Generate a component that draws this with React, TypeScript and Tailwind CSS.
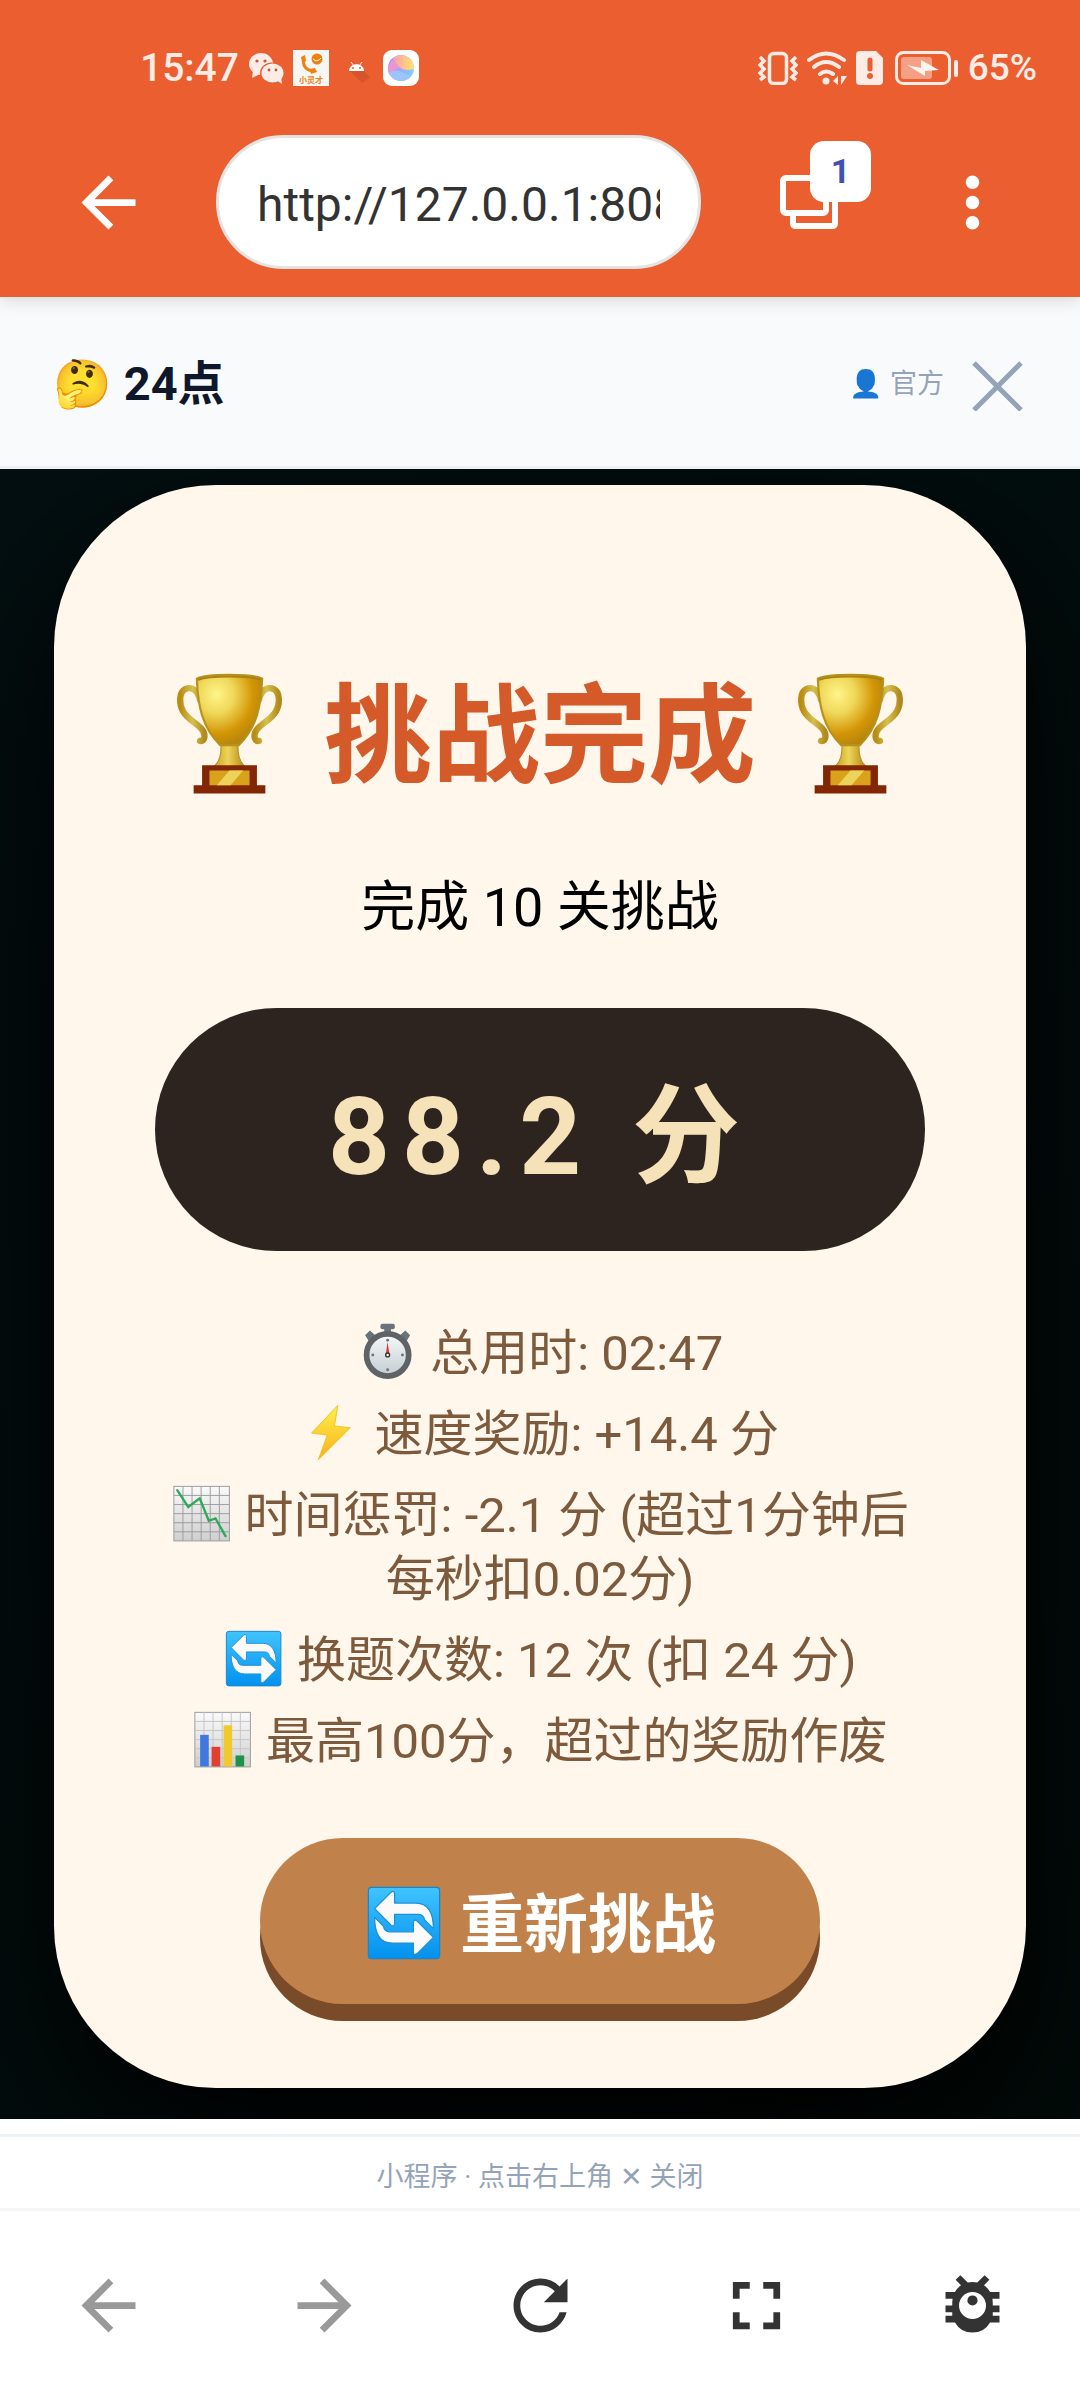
import { ReactNode } from 'react';
import { MdArrowBack, MdArrowForward, MdFullscreen, MdMoreVert, MdRefresh } from 'react-icons/md';

const STATS = [
  { icon: <Stopwatch />, text: '总用时: 02:47' },
  { icon: <Bolt />, text: '速度奖励: +14.4 分' },
  { icon: <ChartDown />, text: '时间惩罚: -2.1 分 (超过1分钟后每秒扣0.02分)' },
  { icon: <Swap />, text: '换题次数: 12 次 (扣 24 分)' },
  { icon: <BarChart />, text: '最高100分，超过的奖励作废' },
];

// Emoji sized icon that sits in a line of text
function Emoji({ children }: { children: ReactNode }) {
  return (
    <svg viewBox="0 0 128 128" aria-hidden="true" className="inline-block w-[1.25em] h-[1.25em] align-[-0.25em]">
      {children}
    </svg>
  );
}

function Trophy() {
  return (
    <Emoji>
      <defs>
        <radialGradient id="cup" cx="0.3" cy="0.28" r="0.75">
          <stop offset="0" stopColor="#fff48a" />
          <stop offset="0.35" stopColor="#f0d95c" />
          <stop offset="0.75" stopColor="#d39505" />
          <stop offset="1" stopColor="#b5850f" />
        </radialGradient>
        <linearGradient id="handle" x1="0" y1="0" x2="1" y2="0">
          <stop offset="0" stopColor="#b98c14" />
          <stop offset="0.5" stopColor="#d6c04e" />
          <stop offset="1" stopColor="#b08a1c" />
        </linearGradient>
        <linearGradient id="stem" x1="0" y1="0" x2="1" y2="0">
          <stop offset="0" stopColor="#c99a16" />
          <stop offset="0.45" stopColor="#ecd55a" />
          <stop offset="1" stopColor="#b57d08" />
        </linearGradient>
      </defs>
      <g fill="none" stroke="url(#handle)" strokeWidth="6" strokeLinecap="round">
        <path d="M36 32c-2-9-8-13-14-10s-6 14-2 21 12 11 17 16 4 13-1 12" />
        <path d="M92 32c2-9 8-13 14-10s6 14 2 21-12 11-17 16-4 13 1 12" />
      </g>
      <path d="M56 70h16v6c0 12 3 17 8 20v4H48v-4c5-3 8-8 8-20z" fill="url(#stem)" stroke="#b48c1c" strokeWidth="1" />
      <path d="M33 12c10-5 52-5 62 0-1 26-5 46-22 63H55C38 58 34 38 33 12z" fill="url(#cup)" stroke="#b8911c" strokeWidth="2" />
      <path d="M34 13c12-4 48-4 60 0" fill="none" stroke="#a98412" strokeWidth="2" />
      <path d="M38 94h52v19h8v8H30v-8h8z" fill="#822603" />
      <path d="M45 99h38v14H45z" fill="#d9a21a" />
      <path d="M52 113l12-14h13l-12 14z" fill="#ecd35c" />
    </Emoji>
  );
}

function Swap() {
  return (
    <Emoji>
      <defs>
        <linearGradient id="swap" x1="0" y1="0" x2="0" y2="1">
          <stop offset="0" stopColor="#40c4ff" />
          <stop offset="1" stopColor="#0291ee" />
        </linearGradient>
      </defs>
      <rect x="7" y="7" width="114" height="114" rx="5" fill="url(#swap)" stroke="#1a86c9" strokeWidth="2" />
      <g fill="#fafafa" stroke="#1f8fd6" strokeWidth="2" strokeLinejoin="round">
        <path d="M17 41L43 15q6-4 6 3v14h34c18 0 28 14 28 41L97 59c-1-6-4-9-10-9H49v15q-1 6-6 2z" />
        <path d="M17 41L43 15q6-4 6 3v14h34c18 0 28 14 28 41L97 59c-1-6-4-9-10-9H49v15q-1 6-6 2z" transform="rotate(180 64 64)" />
      </g>
    </Emoji>
  );
}

function Stopwatch() {
  return (
    <Emoji>
      <defs>
        <linearGradient id="dial" x1="0" y1="0" x2="0" y2="1">
          <stop offset="0" stopColor="#f7f9fa" />
          <stop offset="1" stopColor="#c2ccd2" />
        </linearGradient>
      </defs>
      <g fill="#68737a">
        <rect x="49" y="6" width="30" height="11" rx="4" />
        <rect x="57" y="14" width="14" height="14" />
        <path d="M17 30l10-10 11 10-13 13zM111 30l-10-10-11 10 13 13z" />
      </g>
      <circle cx="64" cy="71" r="44" fill="url(#dial)" stroke="#5f6366" strokeWidth="12" />
      <g fill="#6b7378">
        <circle cx="64" cy="40" r="3" />
        <circle cx="64" cy="102" r="3" />
        <circle cx="33" cy="71" r="3" />
        <circle cx="95" cy="71" r="3" />
      </g>
      <path d="M64 44l4 27h-8z" fill="#e8302a" />
      <circle cx="64" cy="71" r="4" fill="#fff" stroke="#333" strokeWidth="3" />
    </Emoji>
  );
}

function Bolt() {
  return (
    <Emoji>
      <defs>
        <linearGradient id="bolt" x1="0" y1="0" x2="0" y2="1">
          <stop offset="0" stopColor="#fdf04a" />
          <stop offset="1" stopColor="#f7b11c" />
        </linearGradient>
      </defs>
      <path d="M77 7L22 65l33 4-19 52 67-67-33-4z" fill="url(#bolt)" stroke="#f0c02c" strokeWidth="2" />
    </Emoji>
  );
}

function Sheet({ children }: { children: ReactNode }) {
  return (
    <Emoji>
      <defs>
        <linearGradient id="sheet" x1="0" y1="0" x2="0" y2="1">
          <stop offset="0" stopColor="#fafafa" />
          <stop offset="1" stopColor="#cfcfcf" />
        </linearGradient>
      </defs>
      <rect x="6" y="7" width="116" height="114" fill="url(#sheet)" stroke="#9a9a9a" strokeWidth="2" />
      {children}
    </Emoji>
  );
}

function ChartDown() {
  return (
    <Sheet>
      <path
        d="M25 7v114M44 7v114M63 7v114M82 7v114M101 7v114M6 26h116M6 45h116M6 64h116M6 83h116M6 102h116"
        stroke="#9c9c9c"
        strokeWidth="2"
      />
      <path d="M13 15l23 35 24-18 19 47 14-5 21 37" fill="none" stroke="#34a85a" strokeWidth="5" strokeLinecap="round" />
    </Sheet>
  );
}

function BarChart() {
  return (
    <Sheet>
      <path
        d="M25 7v114M44 7v114M63 7v114M82 7v114M101 7v114M6 26h116M6 45h116M6 64h116M6 83h116M6 102h116"
        stroke="#c4c4c4"
        strokeWidth="2"
      />
      <rect x="17" y="54" width="18" height="66" fill="#3f78e0" />
      <rect x="41" y="79" width="18" height="41" fill="#e0402f" />
      <rect x="66" y="34" width="18" height="86" fill="#f0c92e" />
      <rect x="91" y="97" width="18" height="23" fill="#1f9248" />
    </Sheet>
  );
}

function StatusBar() {
  return (
    <div className="h-[135px] pl-[140px] pr-[43px] flex items-center justify-between text-[#fdece6] font-medium">
      <div className="flex items-center gap-[9px]">
        <span className="text-[39px] leading-[48px]">15:47</span>
        {/* Chat app */}
        <svg viewBox="0 0 36 36" className="w-9 h-9">
          <g fill="#fdece6">
            <ellipse cx="13" cy="14" rx="12" ry="11" />
            <path d="M5 21l-1 7 8-4z" />
          </g>
          <ellipse cx="24" cy="23" rx="12" ry="10.500" fill="#ea5e30" />
          <ellipse cx="24.500" cy="23" rx="11" ry="9.500" fill="#fdece6" />
          <path d="M28 30l6 4-1-8z" fill="#fdece6" />
          <g fill="#c2593a">
            <circle cx="9" cy="11" r="1.600" />
            <circle cx="17" cy="11" r="1.600" />
            <circle cx="21" cy="20" r="1.400" />
            <circle cx="28" cy="20" r="1.400" />
          </g>
        </svg>
        {/* Call assistant */}
        <svg viewBox="0 0 36 36" className="w-9 h-9">
          <rect width="36" height="36" fill="#f6f6f4" />
          <path d="M11 9c-2 6 2 11 8 12" fill="none" stroke="#f0810f" strokeWidth="3" />
          <path d="M8 7l4-2 1 6-4 1zM17 19l5-1 2 4-6 2z" fill="#f0810f" />
          <circle cx="24" cy="9" r="5.500" fill="#f0810f" />
          <path d="M20 9q4 4 8-1" fill="none" stroke="#fff" strokeWidth="1" />
          <text x="18" y="33" textAnchor="middle" fontSize="8" fontWeight="700" fill="#f0810f">
            小灵才
          </text>
        </svg>
        {/* Android head with its long shadow */}
        <svg viewBox="0 0 36 36" className="w-9 h-9">
          <path d="M12 21h14l6 6-8 6z" fill="#d6552c" />
          <path d="M11 21c0-9 15-9 15 0z" fill="#fff" />
          <path d="M13 12l3 4M24 12l-3 4" stroke="#fff" strokeWidth="1" />
          <circle cx="15" cy="18" r="1" fill="#ea5e30" />
          <circle cx="22" cy="18" r="1" fill="#ea5e30" />
        </svg>
        {/* Colour ball */}
        <svg viewBox="0 0 36 36" className="w-9 h-9">
          <defs>
            <linearGradient id="ball" x1="0" y1="0" x2="1" y2="0">
              <stop offset="0" stopColor="#a98af5" />
              <stop offset="1" stopColor="#7fd0ff" />
            </linearGradient>
            <linearGradient id="sun" x1="0" y1="0" x2="1" y2="0">
              <stop offset="0" stopColor="#ff9fb0" />
              <stop offset="1" stopColor="#ffe36a" />
            </linearGradient>
          </defs>
          <rect width="36" height="36" rx="9" fill="#fff" />
          <circle cx="18" cy="18" r="13" fill="url(#ball)" />
          <path d="M10 8a13 13 0 0 1 21 11q-10 3-16-3-4-4-5-8z" fill="url(#sun)" />
          <path d="M5 19q2-8 6-10 2 8 8 9-8 0-13 7z" fill="#ee93d4" />
          <path d="M6 23q6-5 13-1t9 4a13 13 0 0 1-22-3z" fill="#9cc4fb" />
        </svg>
      </div>

      <div className="flex items-center gap-[9px]">
        {/* Vibrate */}
        <svg viewBox="0 0 40 34" className="w-10 h-[34px]" fill="none" stroke="#fdece6">
          <rect x="11.500" y="2.500" width="17" height="30" rx="4" strokeWidth="3.500" />
          <path d="M2 6l4 4-4 4 4 4-4 4 4 4-4 3M38 6l-4 4 4 4-4 4 4 4-4 4 4 3" strokeWidth="3.500" />
        </svg>
        {/* Wi-Fi */}
        <svg viewBox="0 0 40 34" className="w-10 h-[34px]" fill="none" stroke="#fdece6">
          <path d="M2 9q17-13 35 0M7 16q12-10 25 0M13 23q6-5 13 0" strokeWidth="4" strokeLinecap="round" />
          <circle cx="19" cy="30" r="3.500" fill="#fdece6" stroke="none" />
          <path d="M31 25v9l-5-4zM34 25v9l6-9z" fill="#fdece6" stroke="none" />
        </svg>
        {/* SIM warning */}
        <svg viewBox="0 0 28 34" className="w-7 h-[34px]">
          <path d="M4 0h16l7 7v23q0 4-4 4H4q-4 0-4-4V4q0-4 4-4z" fill="#fdece6" />
          <path d="M14 9v9" stroke="#ea5e30" strokeWidth="5" strokeLinecap="round" />
          <circle cx="14" cy="25" r="3" fill="#ea5e30" />
        </svg>
        {/* Battery */}
        <svg viewBox="0 0 66 34" className="w-[66px] h-[34px]">
          <rect x="3.500" y="1.500" width="53" height="31" rx="7" fill="none" stroke="#fdece6" strokeWidth="3" />
          <rect x="8" y="6" width="31" height="22" rx="3" fill="#f3a084" />
          <path d="M14 14l14 3V9l18 10-14 1v5z" fill="#fff4ef" />
          <rect x="61" y="9" width="4" height="17" rx="2" fill="#fdece6" />
        </svg>
        <span className="text-[37px] leading-[48px]">65%</span>
      </div>
    </div>
  );
}

function BrowserBar() {
  return (
    <div className="flex items-center pb-7 text-white">
      <button aria-label="Back" className="w-[216px] flex justify-center">
        <MdArrowBack className="size-[81px]" />
      </button>
      <input
        aria-label="Address"
        defaultValue="http://127.0.0.1:8080/"
        className="flex-1 min-w-0 h-[134px] px-[38px] pt-1 rounded-full border-[3px] border-[#e6e4e3] bg-white text-5xl text-[#333333] outline-none"
      />
      <button aria-label="Tabs" className="relative ml-[79px] w-[84px]">
        <svg viewBox="0 0 58 54" className="w-[58px] h-[54px]" fill="none" stroke="#ffffff" strokeWidth="6">
          <rect x="3" y="3" width="43" height="35" rx="3" />
          <path d="M13 39v9q0 3 3 3h36q3 0 3-3V14" />
        </svg>
        <span className="absolute left-[30px] top-[-34px] size-[61px] rounded-[14px] bg-white text-[#3f51b5] text-[34px] leading-[61px] font-bold">
          1
        </span>
      </button>
      <button aria-label="More" className="w-[216px] flex justify-center">
        <MdMoreVert className="size-[81px]" />
      </button>
    </div>
  );
}

function BugIcon() {
  return (
    <svg viewBox="0 0 24 24" className="size-[81px]" fill="#333333">
      <path d="M20 8h-2.800a6 6 0 0 0-1.800-2L17 4.400 15.600 3l-2.200 2.200a6 6 0 0 0-2.800 0L8.400 3 7 4.400 8.600 6a6 6 0 0 0-1.800 2H4v2h2.100L6 11v1H4v2h2v1H4v2h2.800a6 6 0 0 0 10.400 0H20v-2h-2v-1h2v-2h-2v-1l-.1-1H20z" />
      <circle cx="12" cy="12" r="4" fill="#ffffff" />
      <circle cx="12" cy="10.500" r="1.500" />
    </svg>
  );
}

export default function App() {
  return (
    <div className="bg-white font-['Roboto','Noto_Sans_CJK_SC',sans-serif]">
      <header className="relative z-10 bg-[#ea5e30] shadow-[0_3px_16px_rgba(0,0,0,0.15)]">
        <StatusBar />
        <BrowserBar />
      </header>

      {/* Mini program title */}
      <div className="h-[172px] pt-1 pl-[53px] pr-[55px] flex items-center justify-between bg-[#f9fafc] border-b-[3px] border-[#edf1f5]">
        <h1 className="text-[47px] leading-[64px] font-bold text-[#0f172a]">🤔 24点</h1>
        <div className="flex items-center gap-[27px] text-[#94a3b8]">
          <span className="text-[27px] leading-[36px]">👤 官方</span>
          <button aria-label="关闭">
            <svg viewBox="0 0 54 54" className="size-[54px]" fill="none" stroke="currentColor" strokeWidth="5">
              <path d="M3 6l47 47M50 6L3 53" />
            </svg>
          </button>
        </div>
      </div>

      <main className="overflow-hidden px-[54px] pt-4 pb-[31px] bg-linear-to-br from-[#030f11] to-[#020b09]">
        <section className="flex flex-col items-center px-[101px] pt-[172px] pb-[84px] rounded-[162px] bg-[#fff6ec] text-center shadow-[0_60px_150px_#000000]">
          <h2 className="text-[108px] leading-[160px] font-bold text-[#d45a2a] whitespace-nowrap">
            <Trophy /> 挑战完成 <Trophy />
          </h2>
          <p className="mt-[59px] text-[54px] leading-[64px] text-black">完成 10 关挑战</p>
          <div className="w-full mt-[68px] pt-12 pb-8 rounded-full bg-[#2d2420] text-[#f5e2b8] text-[108px] leading-[163px] font-bold tracking-[12px]">
            88.2 分
          </div>
          <ul className="w-full mt-[70px] flex flex-col gap-4 text-[49px] leading-[64px] text-[#7d5a3c]">
            {STATS.map(stat => (
              <li key={stat.text}>
                {stat.icon} {stat.text}
              </li>
            ))}
          </ul>
          <button className="mt-16 px-[104px] pt-[10px] rounded-full bg-[#c1814a] text-white text-[64px] leading-[156px] font-bold shadow-[0_17px_0_#7a4b28]">
            <Swap /> 重新挑战
          </button>
        </section>
      </main>

      <footer className="mt-[15px] pt-[22px] pb-[13px] border-y-[3px] border-t-[#edf2f6] border-b-[#f5f5f5] text-center text-[27px] leading-[36px] text-[#94a3b8]">
        小程序 · 点击右上角 ✕ 关闭
      </footer>

      <nav className="h-[189px] grid grid-cols-5 place-items-center text-[#333333]">
        <button aria-label="Back" className="text-[#999999]">
          <MdArrowBack className="size-[81px]" />
        </button>
        <button aria-label="Forward" className="text-[#999999]">
          <MdArrowForward className="size-[81px]" />
        </button>
        <button aria-label="Reload">
          <MdRefresh className="size-[81px]" />
        </button>
        <button aria-label="Full screen">
          <MdFullscreen className="size-[81px]" />
        </button>
        <button aria-label="Debug">
          <BugIcon />
        </button>
      </nav>
    </div>
  );
}
